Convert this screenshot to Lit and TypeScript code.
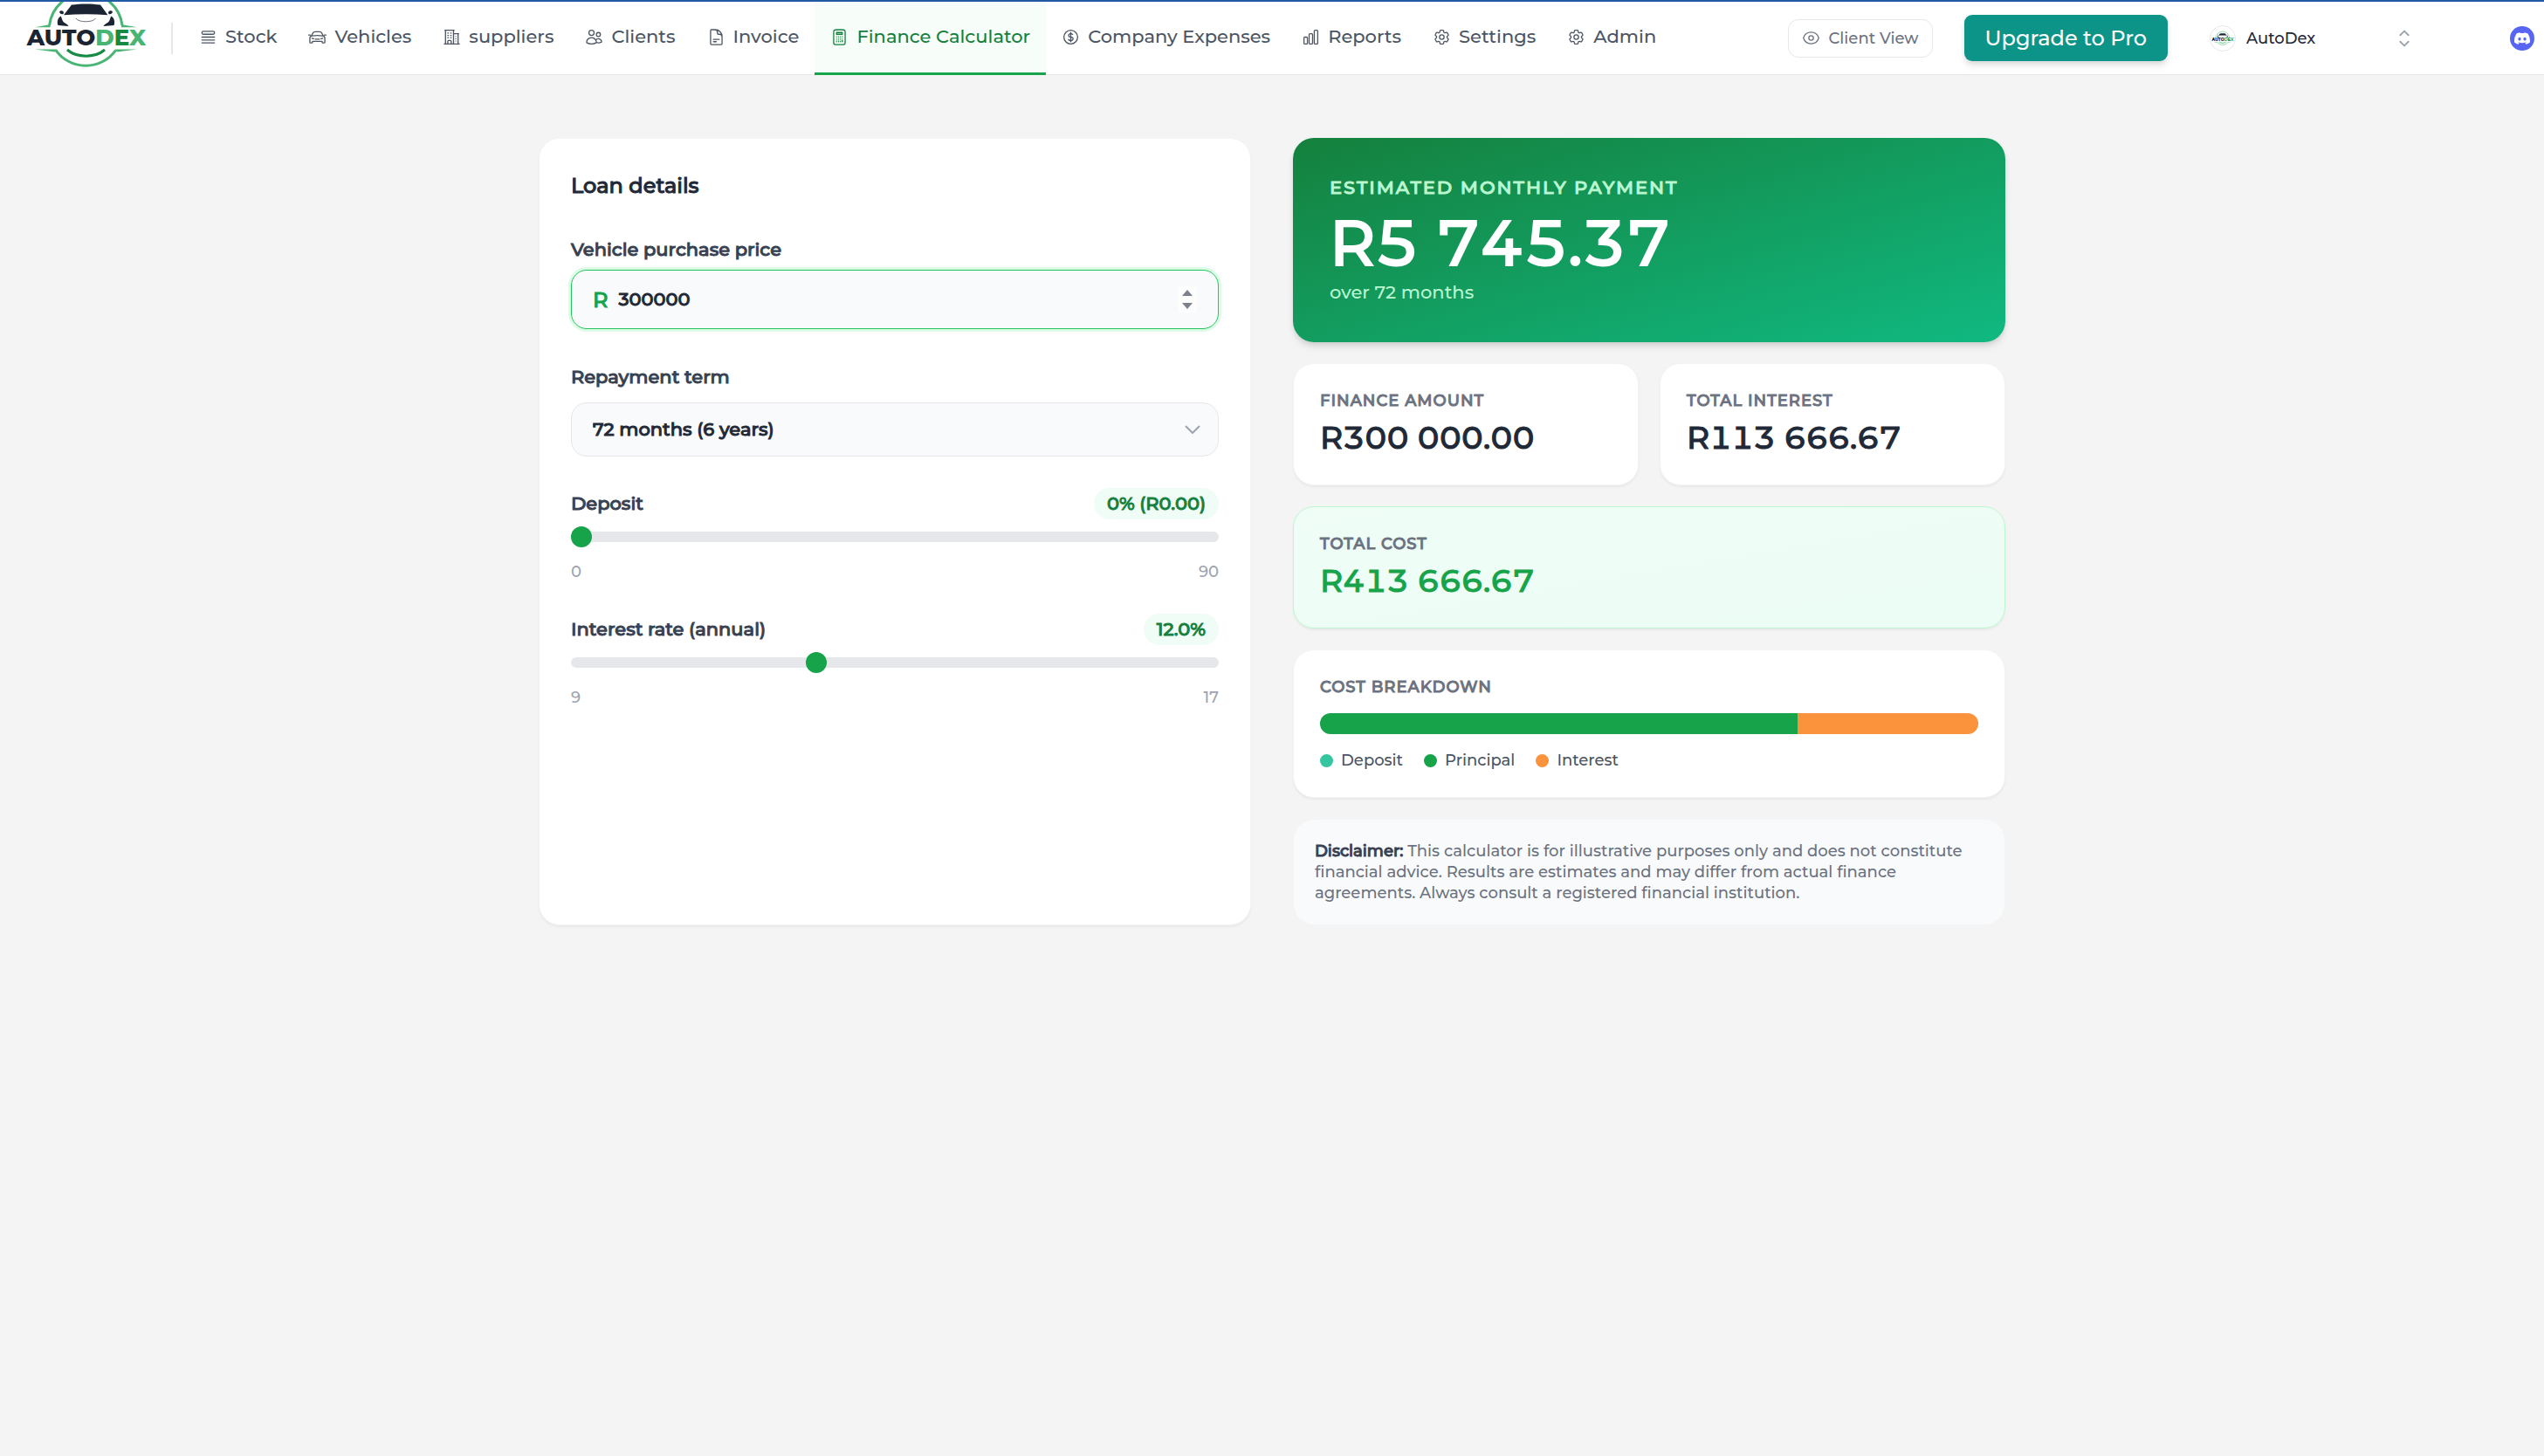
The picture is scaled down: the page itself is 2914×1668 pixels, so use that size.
import { LitElement, html, css, svg, nothing } from "lit";
import { customElement, property, state } from "lit/decorators.js";
import { classMap } from "lit/directives/class-map.js";

const icons: Record<string, string> = {
  stock:
    "M3.75 12h16.5m-16.5 3.75h16.5M3.75 19.5h16.5M5.625 4.5h12.75a1.875 1.875 0 010 3.75H5.625a1.875 1.875 0 010-3.75z",
  car: "M4.4 10.6L6 6.9C6.6 5.5 8 4.9 9.400 4.9h5.2c1.400 0 2.800.6 3.400 2l1.600 3.700M.7 9.300l2.200 0M21.100 9.300l2.200 0M2.200 18.800v-5.200c0-1.600 1-3 2.600-3.200 4.800-.6 9.600-.6 14.400 0 1.600.2 2.600 1.600 2.600 3.200v5.200c0 .5-.3.8-.8.8h-1.900c-.5 0-.8-.3-.8-.8v-1.300H5.700v1.300c0 .5-.3.8-.8.8H3c-.5 0-.8-.3-.8-.8zM5 13.600l2.300.6M19 13.600l-2.300.6M9.300 14.800h5.400",
  suppliers:
    "M2.25 21h19.5m-18-18v18m10.5-18v18m6-13.5V21M6.75 6.75h.75m-.75 3h.75m-.75 3h.75m3-6h.75m-.75 3h.75m-.75 3h.75M6.75 21v-3.375c0-.621.504-1.125 1.125-1.125h2.25c.621 0 1.125.504 1.125 1.125V21M3 3h12m-.75 4.5H21m-3.75 3.75h.008v.008h-.008v-.008zm0 3h.008v.008h-.008v-.008zm0 3h.008v.008h-.008v-.008z",
  clients:
    "M15 19.128a9.38 9.38 0 002.625.372 9.337 9.337 0 004.121-.952 4.125 4.125 0 00-7.533-2.493M15 19.128v-.003c0-1.113-.285-2.16-.786-3.07M15 19.128v.106A12.318 12.318 0 018.624 21c-2.331 0-4.512-.645-6.374-1.766l-.001-.109a6.375 6.375 0 0111.964-3.07M12 6.375a3.375 3.375 0 11-6.75 0 3.375 3.375 0 016.75 0zm8.25 2.25a2.625 2.625 0 11-5.25 0 2.625 2.625 0 015.25 0z",
  invoice:
    "M19.5 14.25v-2.625a3.375 3.375 0 00-3.375-3.375h-1.5A1.125 1.125 0 0113.5 7.125v-1.5a3.375 3.375 0 00-3.375-3.375H8.25m0 12.75h7.5m-7.5 3H12M10.5 2.25H5.625c-.621 0-1.125.504-1.125 1.125v17.25c0 .621.504 1.125 1.125 1.125h12.75c.621 0 1.125-.504 1.125-1.125V11.25a9 9 0 00-9-9z",
  calculator:
    "M15.75 15.75V18m-7.5-6.75h.008v.008H8.25v-.008zm0 2.25h.008v.008H8.25V13.5zm0 2.25h.008v.008H8.25v-.008zm0 2.25h.008v.008H8.25V18zm2.498-6.75h.007v.008h-.007v-.008zm0 2.25h.007v.008h-.007V13.5zm0 2.25h.007v.008h-.007v-.008zm0 2.25h.007v.008h-.007V18zm2.504-6.75h.008v.008h-.008v-.008zm0 2.25h.008v.008h-.008V13.5zm0 2.25h.008v.008h-.008v-.008zm0 2.25h.008v.008h-.008V18zm2.498-6.75h.008v.008h-.008v-.008zm0 2.25h.008v.008h-.008V13.5zM8.25 6h7.5v2.25h-7.5V6zM12 2.25c-1.892 0-3.758.11-5.593.322C5.307 2.7 4.5 3.65 4.5 4.757V19.5a2.25 2.25 0 002.25 2.25h10.5a2.25 2.25 0 002.25-2.25V4.757c0-1.108-.806-2.057-1.907-2.185A48.507 48.507 0 0012 2.25z",
  dollar:
    "M12 6v12m-3-2.818l.879.659c1.171.879 3.07.879 4.242 0 1.172-.879 1.172-2.303 0-3.182C13.536 12.219 12.768 12 12 12c-.725 0-1.45-.22-2.003-.659-1.106-.879-1.106-2.303 0-3.182s2.9-.879 4.006 0l.415.33M21 12a9 9 0 11-18 0 9 9 0 0118 0z",
  chart:
    "M3 13.125C3 12.504 3.504 12 4.125 12h2.25c.621 0 1.125.504 1.125 1.125v6.75C7.5 20.496 6.996 21 6.375 21h-2.25A1.125 1.125 0 013 19.875v-6.75zM9.75 8.625c0-.621.504-1.125 1.125-1.125h2.25c.621 0 1.125.504 1.125 1.125v11.25c0 .621-.504 1.125-1.125 1.125h-2.25a1.125 1.125 0 01-1.125-1.125V8.625zM16.5 4.125c0-.621.504-1.125 1.125-1.125h2.25C20.496 3 21 3.504 21 4.125v15.75c0 .621-.504 1.125-1.125 1.125h-2.25a1.125 1.125 0 01-1.125-1.125V4.125z",
  cog: "M9.594 3.94c.09-.542.56-.94 1.11-.94h2.593c.55 0 1.02.398 1.11.94l.213 1.281c.063.374.313.686.645.87.074.04.147.083.22.127.324.196.72.257 1.075.124l1.217-.456a1.125 1.125 0 011.37.49l1.296 2.247a1.125 1.125 0 01-.26 1.431l-1.003.827c-.293.24-.438.613-.431.992a6.759 6.759 0 010 .255c-.007.378.138.75.43.99l1.005.828c.424.35.534.954.26 1.43l-1.298 2.247a1.125 1.125 0 01-1.369.491l-1.217-.456c-.355-.133-.75-.072-1.076.124a6.57 6.57 0 01-.22.128c-.331.183-.581.495-.644.869l-.213 1.28c-.09.543-.56.941-1.11.941h-2.594c-.55 0-1.02-.398-1.11-.94l-.213-1.281c-.062-.374-.312-.686-.644-.87a6.52 6.52 0 01-.22-.127c-.325-.196-.72-.257-1.076-.124l-1.217.456a1.125 1.125 0 01-1.369-.49l-1.297-2.247a1.125 1.125 0 01.26-1.431l1.004-.827c.292-.24.437-.613.43-.992a6.932 6.932 0 010-.255c.007-.378-.138-.75-.43-.99l-1.004-.828a1.125 1.125 0 01-.26-1.43l1.297-2.247a1.125 1.125 0 011.37-.491l1.216.456c.356.133.751.072 1.076-.124.072-.044.146-.087.22-.128.332-.183.582-.495.644-.869l.214-1.281zM15 12a3 3 0 11-6 0 3 3 0 016 0z",
  eye: "M2.036 12.322a1.012 1.012 0 010-.639C3.423 7.51 7.36 4.5 12 4.5c4.638 0 8.573 3.007 9.963 7.178.07.207.07.431 0 .639C20.577 16.49 16.64 19.5 12 19.5c-4.638 0-8.573-3.007-9.963-7.178zM15 12a3 3 0 11-6 0 3 3 0 016 0z",
  updown: "M8.25 15L12 18.75 15.75 15m-7.5-6L12 5.25 15.75 9",
};

const discordGlyph =
  "M20.317 4.3698a19.7913 19.7913 0 00-4.8851-1.5152.0741.0741 0 00-.0785.0371c-.211.3753-.4447.8648-.6083 1.2495-1.8447-.2762-3.68-.2762-5.4868 0-.1636-.3933-.4058-.8742-.6177-1.2495a.077.077 0 00-.0785-.037 19.7363 19.7363 0 00-4.8852 1.515.0699.0699 0 00-.0321.0277C.5334 9.0458-.319 13.5799.0992 18.0578a.0824.0824 0 00.0312.0561c2.0528 1.5076 4.0413 2.4228 5.9929 3.0294a.0777.0777 0 00.0842-.0276c.4616-.6304.8731-1.2952 1.226-1.9942a.076.076 0 00-.0416-.1057c-.6528-.2476-1.2743-.5495-1.8722-.8923a.077.077 0 01-.0076-.1277c.1258-.0943.2517-.1923.3718-.2914a.0743.0743 0 01.0776-.0105c3.9278 1.7933 8.18 1.7933 12.0614 0a.0739.0739 0 01.0785.0095c.1202.099.246.1981.3728.2924a.077.077 0 01-.0066.1276 12.2986 12.2986 0 01-1.873.8914.0766.0766 0 00-.0407.1067c.3604.698.7719 1.3628 1.225 1.9932a.076.076 0 00.0842.0286c1.961-.6067 3.9495-1.5219 6.0023-3.0294a.077.077 0 00.0313-.0552c.5004-5.177-.8382-9.6739-3.5485-13.6604a.061.061 0 00-.0312-.0286zM8.02 15.3312c-1.1825 0-2.1569-1.0857-2.1569-2.419 0-1.3332.9555-2.4189 2.157-2.4189 1.2108 0 2.1757 1.0952 2.1568 2.419 0 1.3332-.9555 2.4189-2.1569 2.4189zm7.9748 0c-1.1825 0-2.1569-1.0857-2.1569-2.419 0-1.3332.9554-2.4189 2.1569-2.4189 1.2108 0 2.1757 1.0952 2.1568 2.419 0 1.3332-.946 2.4189-2.1568 2.4189z";

const icon = (name: string, className = "icon") => svg`
  <svg class=${className} viewBox="0 0 24 24" fill="none" stroke="currentColor"
    stroke-width="1.5" stroke-linecap="round" stroke-linejoin="round" aria-hidden="true">
    <path d=${icons[name]}></path>
  </svg>`;

/** Brand mark: a car in a ring with the wordmark across it. */
@customElement("brand-logo")
export class BrandLogo extends LitElement {
  static styles = css`
    :host {
      display: block;
    }
    .mark {
      display: block;
      width: 100%;
      height: auto;
      overflow: hidden;
    }
    .word {
      font-family: Montserrat, "DejaVu Sans", sans-serif;
      font-size: 26px;
      font-weight: 800;
      fill: #1b2433;
    }
    .light {
      fill: #48b574;
    }
    .deep {
      fill: #148a42;
    }
  `;

  /** Draws the whole ring instead of the part that fits a low bar. */
  @property({ type: Boolean }) full = false;

  render() {
    return html`
      <svg class="mark" viewBox=${this.full ? "28 -14 142 94" : "28 2 142 76"} role="img" aria-label="AutoDex">
        <path d="M56.600 29A42 42 0 01140 29M64 57.600A42 42 0 00132.500 57.600" fill="none" stroke="#48b574" stroke-width="3"></path>
        <path d="M40 31.200L57.600 28v3.200zM157 31.200L139 28v3.200zM40 56.400l25.500 0-2.500 3zM157 56.400l-25.500 0 2.500 3z" fill="#48b574"></path>
        <path d="M77 57C88 66.500 109 66.500 120 57" fill="none" stroke="#148a42" stroke-width="3"></path>
        <path d="M82 5.500C92 4 105 4 115 5.500L123.500 17.200C107 16 90 16 73 17.200z" fill="#1b2433"></path>
        <path d="M68 13.500c1.500-2 4-1.500 5 .5l-.5 2c-2 .5-4 0-4.500-2.500zM129 13.500c-1.500-2-4-1.500-5 .5l.5 2c2 .5 4 0 4.500-2.500z" fill="#1b2433"></path>
        <path d="M69.500 18.500c-3.500 2-4.500 7-3 10.500l12 1c-1-2.500-4-3-6-5-1.500-2-1.500-4.500-3-6.500zM127.500 18.500c3.500 2 4.500 7 3 10.500l-12 1c1-2.500 4-3 6-5 1.500-2 1.500-4.500 3-6.500z" fill="#1b2433"></path>
        <path d="M87 21c2.500 5 20 5 22.500 0" fill="none" stroke="#6b7280" stroke-width="1"></path>
        <text class="word" x="99" y="52" text-anchor="middle">AUTO<tspan class="light">D</tspan><tspan class="deep">E</tspan><tspan class="light">X</tspan></text>
      </svg>
    `;
  }
}

interface NavItem {
  label: string;
  icon: string;
  active?: boolean;
}

const navItems: NavItem[] = [
  { label: "Stock", icon: "stock" },
  { label: "Vehicles", icon: "car" },
  { label: "suppliers", icon: "suppliers" },
  { label: "Clients", icon: "clients" },
  { label: "Invoice", icon: "invoice" },
  { label: "Finance Calculator", icon: "calculator", active: true },
  { label: "Company Expenses", icon: "dollar" },
  { label: "Reports", icon: "chart" },
  { label: "Settings", icon: "cog" },
  { label: "Admin", icon: "cog" },
];

@customElement("top-bar")
export class TopBar extends LitElement {
  static styles = css`
    :host {
      display: block;
    }
    .bar {
      display: flex;
      align-items: center;
      height: 83px;
      border-top: 2px solid #1f5aa3;
      border-bottom: 1px solid #e5e7eb;
      background: #fff;
    }
    .brand {
      align-self: flex-start;
      flex: none;
      width: 142px;
      margin: 0 26px 0 28px;
    }
    .divider {
      flex: none;
      width: 2px;
      height: 36px;
      margin-right: 12px;
      background: #e5e7eb;
    }
    .nav {
      display: flex;
      align-self: stretch;
      margin-bottom: -1px;
    }
    .link {
      display: flex;
      align-items: center;
      gap: 9px;
      padding: 0 18px 1px;
      border-bottom: 3px solid transparent;
      color: #4b5563;
      font-size: 21px;
      line-height: 30px;
      text-decoration: none;
      white-space: nowrap;
    }
    .link.active {
      border-color: #16a34a;
      background: #f7fef9;
      color: #15803d;
    }
    .icon {
      flex: none;
      width: 21px;
      height: 21px;
    }
    .actions {
      display: flex;
      align-items: center;
      margin-left: auto;
      padding-right: 11px;
    }
    button {
      font-family: inherit;
      font-weight: inherit;
      cursor: pointer;
      white-space: nowrap;
    }
    .client {
      display: flex;
      align-items: center;
      gap: 9px;
      height: 44px;
      padding: 0 15px;
      border: 1px solid #e5e7eb;
      border-radius: 12px;
      background: #fff;
      color: #6b7280;
      font-size: 18px;
    }
    .upgrade {
      height: 53px;
      margin-left: 36px;
      padding: 0 24px;
      border: 0;
      border-radius: 9px;
      background: #0d9488;
      box-shadow: 0 6px 9px -1px rgba(0, 0, 0, 0.1), 0 3px 6px -2px rgba(0, 0, 0, 0.1);
      color: #fff;
      font-size: 24px;
    }
    .account {
      display: flex;
      align-items: center;
      gap: 12px;
      width: 253px;
      margin-left: 36px;
      padding: 0 3px 0 12px;
      border: 0;
      background: none;
      color: #1f2937;
      font-size: 18px;
    }
    .avatar {
      display: flex;
      align-items: center;
      justify-content: center;
      width: 28px;
      height: 28px;
      border: 1px solid #e5e7eb;
      border-radius: 50%;
    }
    .avatar-logo {
      width: 26px;
    }
    .updown {
      width: 30px;
      height: 30px;
      margin-left: auto;
      color: #9ca3af;
    }
    .discord {
      display: flex;
      align-items: center;
      justify-content: center;
      width: 28px;
      height: 28px;
      margin-left: 103px;
      border-radius: 50%;
      background: #5865f2;
      color: #fff;
    }
    .discord-glyph {
      width: 18px;
      height: 18px;
    }
  `;

  render() {
    return html`
      <header class="bar">
        <a class="brand" href="#home"><brand-logo></brand-logo></a>
        <span class="divider"></span>
        <nav class="nav" aria-label="Main">
          ${navItems.map(
            (item) => html`<a
              class=${classMap({ link: true, active: !!item.active })}
              href="#${item.label.toLowerCase().replace(/ /g, "-")}"
              aria-current=${item.active ? "page" : nothing}
              >${icon(item.icon)}<span>${item.label}</span></a
            >`,
          )}
        </nav>
        <div class="actions">
          <button class="client" type="button">${icon("eye")}<span>Client View</span></button>
          <button class="upgrade" type="button">Upgrade to Pro</button>
          <button class="account" type="button" aria-haspopup="listbox">
            <span class="avatar"><brand-logo class="avatar-logo" full></brand-logo></span>
            <span>AutoDex</span>
            ${icon("updown", "updown")}
          </button>
          <a class="discord" href="#discord" aria-label="Discord">
            <svg class="discord-glyph" viewBox="0 0 24 24" fill="currentColor" aria-hidden="true">
              <path d=${discordGlyph}></path>
            </svg>
          </a>
        </div>
      </header>
    `;
  }
}

@customElement("loan-form")
export class LoanForm extends LitElement {
  static styles = css`
    :host {
      display: grid;
    }
    .card {
      padding: 36px;
      border: 1px solid #f3f4f6;
      border-radius: 24px;
      background: #fff;
      box-shadow: 0 2px 3px rgba(0, 0, 0, 0.05);
    }
    .title {
      margin: 0 0 36px;
      color: #1f2937;
      font-size: 24px;
      font-weight: 500;
      line-height: 36px;
      -webkit-text-stroke: 1px;
    }
    .field {
      display: flex;
      flex-direction: column;
      margin-bottom: 36px;
    }
    .label {
      color: #374151;
      font-size: 21px;
      line-height: 38px;
      -webkit-text-stroke: 1px;
    }
    .money {
      display: flex;
      align-items: center;
      height: 66px;
      margin-top: 4px;
      padding: 0 24px;
      border: 1px solid #22c55e;
      border-radius: 18px;
      background: #f9fafb;
      box-shadow: 0 0 0 3px #dcfce7;
    }
    .currency {
      margin-right: 12px;
      color: #16a34a;
      font-size: 24px;
      -webkit-text-stroke: 1px;
    }
    .amount {
      flex: 1;
      min-width: 0;
      padding: 0;
      border: 0;
      outline: 0;
      background: none;
      color: #1f2937;
      font-family: inherit;
      font-size: 21px;
      font-weight: 500;
      line-height: 30px;
      appearance: textfield;
      -moz-appearance: textfield;
      -webkit-text-stroke: 1px;
    }
    .amount::-webkit-inner-spin-button {
      appearance: none;
      margin: 0;
    }
    .steps {
      display: flex;
      flex-direction: column;
      width: 22px;
      background: #fdfdfd;
    }
    .step {
      display: flex;
      align-items: center;
      justify-content: center;
      height: 15px;
      padding: 0;
      border: 0;
      background: none;
      color: #7b828e;
      cursor: pointer;
    }
    .tri {
      width: 12px;
      height: 7px;
    }
    .picker {
      position: relative;
      display: grid;
      margin-top: 10px;
    }
    .term {
      height: 62px;
      padding: 0 60px 1px 24px;
      border: 1px solid #e5e7eb;
      border-radius: 18px;
      background: #f9fafb;
      color: #1f2937;
      font-family: inherit;
      font-size: 21px;
      font-weight: 500;
      appearance: none;
      -webkit-text-stroke: 1px;
    }
    .chevron {
      position: absolute;
      top: 26px;
      right: 21px;
      width: 18px;
      height: 10px;
      color: #9ca3af;
      pointer-events: none;
    }
    .head {
      display: flex;
      align-items: center;
      justify-content: space-between;
      height: 36px;
    }
    .pill {
      padding: 3px 15px;
      border-radius: 18px;
      background: #f0fdf6;
      color: #15803d;
      font-size: 21px;
      line-height: 30px;
      -webkit-text-stroke: 1px;
    }
    .range {
      width: 100%;
      height: 24px;
      margin: 8px 0 16px;
      background: none;
      appearance: none;
    }
    .range::-webkit-slider-runnable-track {
      height: 12px;
      border-radius: 6px;
      background: #e5e7eb;
    }
    .range::-webkit-slider-thumb {
      width: 24px;
      height: 24px;
      margin-top: -6px;
      border: 0;
      border-radius: 50%;
      background: #16a34a;
      appearance: none;
    }
    .limits {
      display: flex;
      justify-content: space-between;
      color: #9ca3af;
      font-size: 18px;
      line-height: 24px;
    }
  `;

  @state() private price = 300000;

  private step(by: number) {
    this.price = Math.max(0, this.price + by);
  }

  private slider(id: string, label: string, shown: string, min: number, max: number, value: number) {
    return html`
      <div class="field">
        <div class="head">
          <label class="label" for=${id}>${label}</label>
          <output class="pill" for=${id}>${shown}</output>
        </div>
        <input class="range" id=${id} type="range" min=${min} max=${max} step="0.5" .value=${String(value)} />
        <div class="limits"><span>${min}</span><span>${max}</span></div>
      </div>
    `;
  }

  render() {
    return html`
      <section class="card">
        <h2 class="title">Loan details</h2>
        <div class="field">
          <label class="label" for="price">Vehicle purchase price</label>
          <div class="money">
            <span class="currency">R</span>
            <input
              class="amount"
              id="price"
              type="number"
              .value=${String(this.price)}
              @input=${(e: Event) => (this.price = Number((e.target as HTMLInputElement).value))}
            />
            <div class="steps">
              <button class="step" type="button" aria-label="Increase" @click=${() => this.step(1000)}>
                <svg class="tri" viewBox="0 0 12 7" fill="currentColor"><path d="M6 0l6 7H0z"></path></svg>
              </button>
              <button class="step" type="button" aria-label="Decrease" @click=${() => this.step(-1000)}>
                <svg class="tri" viewBox="0 0 12 7" fill="currentColor"><path d="M6 7L0 0h12z"></path></svg>
              </button>
            </div>
          </div>
        </div>
        <div class="field">
          <label class="label" for="term">Repayment term</label>
          <div class="picker">
            <select class="term" id="term">
              <option>72 months (6 years)</option>
            </select>
            <svg class="chevron" viewBox="0 0 18 10" fill="none" stroke="currentColor" stroke-width="2" aria-hidden="true">
              <path d="M1 1l8 8 8-8"></path>
            </svg>
          </div>
        </div>
        ${this.slider("deposit", "Deposit", "0% (R0.00)", 0, 90, 0)}
        ${this.slider("rate", "Interest rate (annual)", "12.0%", 9, 17, 12)}
      </section>
    `;
  }
}

const breakdown = [
  { label: "Deposit", tone: "deposit", share: 0 },
  { label: "Principal", tone: "principal", share: (300000 / 413666.67) * 100 },
  { label: "Interest", tone: "interest", share: (113666.67 / 413666.67) * 100 },
];

@customElement("loan-results")
export class LoanResults extends LitElement {
  static styles = css`
    :host {
      display: flex;
      flex-direction: column;
      gap: 24px;
    }
    .payment {
      padding: 42px;
      border-radius: 24px;
      background: linear-gradient(to bottom right, #15803d, #10b981);
      box-shadow: 0 6px 9px -1px rgba(0, 0, 0, 0.1), 0 3px 6px -2px rgba(0, 0, 0, 0.1);
      color: #bbf7d0;
      font-size: 21px;
      line-height: 30px;
    }
    .payment-label {
      margin: 0;
      letter-spacing: 2px;
      text-transform: uppercase;
      -webkit-text-stroke: 1px;
    }
    .payment-value {
      margin: 12px 0 6px;
      color: #fff;
      font-size: 72px;
      font-variant-numeric: tabular-nums;
      line-height: 72px;
      -webkit-text-stroke: 2px;
    }
    .payment-term {
      margin: 0;
    }
    .pair {
      display: grid;
      grid-template-columns: 1fr 1fr;
      gap: 24px;
    }
    .card {
      padding: 30px;
      border: 1px solid #f3f4f6;
      border-radius: 24px;
      background: #fff;
      box-shadow: 0 2px 3px rgba(0, 0, 0, 0.05);
    }
    .card.total {
      border-color: #bbf7d0;
      background: linear-gradient(to bottom right, #effdf6, #ecfdf5);
    }
    .label {
      margin: 0;
      color: #6b7280;
      font-size: 18px;
      font-weight: 500;
      letter-spacing: 1px;
      line-height: 24px;
      text-transform: uppercase;
      -webkit-text-stroke: 1px;
    }
    .value {
      margin: 6px 0 0;
      color: #1f2937;
      font-size: 36px;
      font-variant-numeric: tabular-nums;
      line-height: 48px;
      -webkit-text-stroke: 1px;
    }
    .total .value {
      color: #16a34a;
    }
    .meter {
      display: flex;
      height: 24px;
      margin: 18px 0;
      overflow: hidden;
      border-radius: 12px;
      background: #f3f4f6;
    }
    .legend {
      display: flex;
      gap: 24px;
      margin: 0;
      padding: 0;
      color: #4b5563;
      font-size: 18px;
      line-height: 24px;
      list-style: none;
    }
    .key {
      display: flex;
      align-items: center;
      gap: 9px;
    }
    .dot {
      width: 15px;
      height: 15px;
      border-radius: 50%;
    }
    .deposit {
      background: #34c79f;
    }
    .principal {
      background: #16a34a;
    }
    .interest {
      background: #fb923c;
    }
    .note {
      margin: 0;
      padding: 24px;
      border: 1px solid #f3f4f6;
      border-radius: 24px;
      background: #f9fafb;
      color: #6b7280;
      font-size: 18px;
      line-height: 24px;
    }
    .strong {
      color: #374151;
      font-weight: 500;
      -webkit-text-stroke: 1px;
    }
  `;

  private stat(label: string, value: string, total = false) {
    return html`
      <div class=${classMap({ card: true, total })}>
        <p class="label">${label}</p>
        <p class="value">${value}</p>
      </div>
    `;
  }

  render() {
    return html`
      <section class="payment">
        <p class="payment-label">Estimated monthly payment</p>
        <p class="payment-value">R5 745.37</p>
        <p class="payment-term">over 72 months</p>
      </section>
      <div class="pair">
        ${this.stat("Finance amount", "R300 000.00")} ${this.stat("Total interest", "R113 666.67")}
      </div>
      ${this.stat("Total cost", "R413 666.67", true)}
      <section class="card">
        <h3 class="label">Cost breakdown</h3>
        <div class="meter">
          ${breakdown.map((part) => html`<span class=${part.tone} style="width:${part.share}%"></span>`)}
        </div>
        <ul class="legend">
          ${breakdown.map((part) => html`<li class="key"><span class="dot ${part.tone}"></span>${part.label}</li>`)}
        </ul>
      </section>
      <p class="note">
        <strong class="strong">Disclaimer:</strong> This calculator is for illustrative purposes only and does not
        constitute financial advice. Results are estimates and may differ from actual finance agreements. Always consult
        a registered financial institution.
      </p>
    `;
  }
}

@customElement("app-root")
export class AppRoot extends LitElement {
  static styles = css`
    :host {
      display: block;
      min-height: 100vh;
      background: #f4f4f4;
      font-family: Montserrat, "DejaVu Sans", sans-serif;
      font-weight: 500;
    }
    .main {
      display: grid;
      grid-template-columns: 1fr 1fr;
      gap: 48px;
      max-width: 1680px;
      margin: 0 auto;
      padding: 72px 24px;
    }
  `;

  render() {
    return html`
      <top-bar></top-bar>
      <main class="main">
        <loan-form></loan-form>
        <loan-results></loan-results>
      </main>
    `;
  }
}
